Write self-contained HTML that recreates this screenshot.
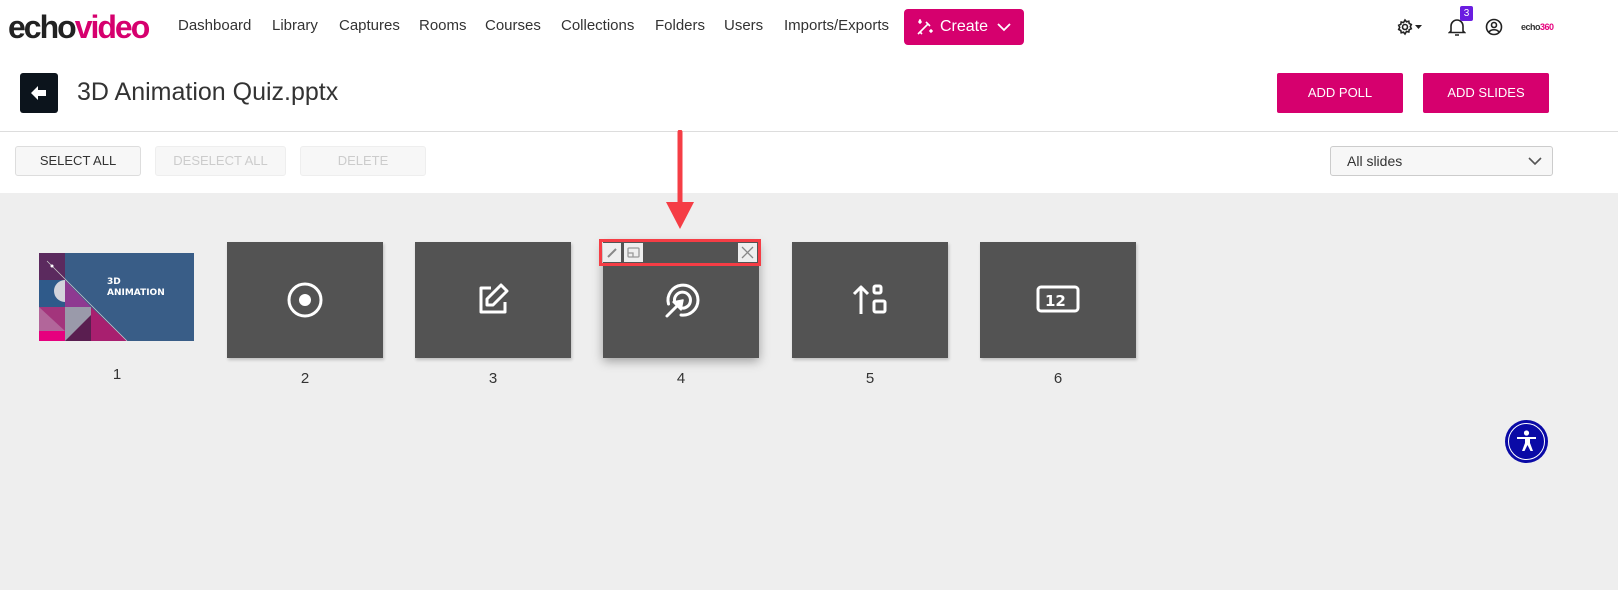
<!DOCTYPE html>
<html><head><meta charset="utf-8"><style>
*{box-sizing:border-box;margin:0;padding:0}
body{width:1618px;height:595px;overflow:hidden;font-family:"Liberation Sans",sans-serif;background:#fff;position:relative;color:#333}
.abs{position:absolute}
.nav a{position:absolute;top:17px;font-size:15px;color:#333;text-decoration:none}
.btn{position:absolute;border:1px solid #ddd;border-radius:3px;background:#f7f7f7;font-size:13px;text-align:center;line-height:28px}
.pbtn{position:absolute;background:#d6006e;color:#fff;font-size:13px;text-align:center;line-height:40px;border-radius:2px;top:73px;height:40px}
.slide{position:absolute;top:242px;width:156px;height:116px;background:#535353;box-shadow:1px 2px 3px rgba(0,0,0,.2)}
.num{position:absolute;top:370px;font-size:15px;color:#333;width:156px;text-align:center}
.slide svg{position:absolute;left:58px;top:38px}
</style></head><body>
<div class="abs" style="left:8px;top:7px;font-size:32px;font-weight:bold;letter-spacing:-2px;line-height:40px"><span style="color:#222">echo</span><span style="color:#d6006e">video</span></div>
<div class="nav">
<a style="left:178px">Dashboard</a><a style="left:272px">Library</a><a style="left:339px">Captures</a><a style="left:419px">Rooms</a><a style="left:485px">Courses</a><a style="left:561px">Collections</a><a style="left:655px">Folders</a><a style="left:724px">Users</a><a style="left:784px">Imports/Exports</a>
</div>
<div class="abs" style="left:904px;top:9px;width:120px;height:36px;background:#d6006e;border-radius:4px;color:#fff;font-size:16px;line-height:36px">
<svg class="abs" style="left:12px;top:10px" width="17" height="17" viewBox="0 0 17 17" fill="none" stroke="#fff" stroke-width="1.6"><path d="M2 15L12 5M4 13l2 2M10 3l4 4"/><path d="M3 3l1-2 1 2-1 1zM14 12l1-1 1 1-1 1z" fill="#fff"/></svg>
<span class="abs" style="left:36px">Create</span>
<svg class="abs" style="left:92px;top:12px" width="16" height="12" viewBox="0 0 16 12" fill="none" stroke="#fff" stroke-width="1.8"><path d="M2 3l6 6 6-6"/></svg>
</div>
<svg class="abs" style="left:1397px;top:18px" width="30" height="18" viewBox="0 0 30 18" fill="none" stroke="#222" stroke-width="1.6"><circle cx="8" cy="9" r="2.5"/><path d="M8 2l1.5 1.8 2.3-.6.4 2.3 2.1 1-1 2.1 1 2.1-2.1 1-.4 2.3-2.3-.6L8 16l-1.5-1.8-2.3.6-.4-2.3-2.1-1 1-2.1-1-2.1 2.1-1 .4-2.3 2.3.6z"/><path d="M18 7h7l-3.5 4z" fill="#222" stroke="none"/></svg>
<svg class="abs" style="left:1448px;top:17px" width="18" height="20" viewBox="0 0 18 20" fill="none" stroke="#222" stroke-width="1.6"><path d="M3 14V9a6 6 0 0112 0v5l1.5 1.5h-15z M7 18h4"/></svg>
<div class="abs" style="left:1460px;top:6px;width:13px;height:15px;background:#6a1de0;color:#fff;font-size:10px;text-align:center;line-height:15px;border-radius:2px">3</div>
<svg class="abs" style="left:1485px;top:18px" width="18" height="18" viewBox="0 0 18 18" fill="none" stroke="#222" stroke-width="1.6"><circle cx="9" cy="9" r="7.5"/><circle cx="9" cy="7" r="2.5"/><path d="M4 14c2-3 8-3 10 0"/></svg>
<div class="abs" style="left:1521px;top:22px;font-size:9px;font-weight:bold;letter-spacing:-.5px"><span style="color:#333">echo</span><span style="color:#e6007e">360</span></div>

<div class="abs" style="left:20px;top:73px;width:38px;height:40px;background:#0c141c;border-radius:3px">
<svg class="abs" style="left:10px;top:12px" width="18" height="16" viewBox="0 0 18 16"><path d="M1 8l7-7v4h8v6H8v4z" fill="#fff"/></svg></div>
<div class="abs" style="left:77px;top:78px;font-size:25px;color:#333">3D Animation Quiz.pptx</div>
<div class="pbtn" style="left:1277px;width:126px">ADD POLL</div>
<div class="pbtn" style="left:1423px;width:126px">ADD SLIDES</div>
<div class="abs" style="left:0;top:131px;width:1618px;height:1px;background:#ddd"></div>

<div class="btn" style="left:15px;top:146px;width:126px;height:30px;color:#333">SELECT ALL</div>
<div class="btn" style="left:155px;top:146px;width:131px;height:30px;color:#ccc;border-color:#eee">DESELECT ALL</div>
<div class="btn" style="left:300px;top:146px;width:126px;height:30px;color:#ccc;border-color:#eee">DELETE</div>
<div class="abs" style="left:1330px;top:146px;width:223px;height:30px;border:1px solid #ccc;border-radius:3px;background:#f7f7f7;font-size:14px;line-height:28px;padding-left:16px">All slides
<svg class="abs" style="left:197px;top:10px" width="14" height="9" viewBox="0 0 14 9" fill="none" stroke="#555" stroke-width="1.6"><path d="M1 1l6 6 6-6"/></svg></div>

<div class="abs" style="left:0;top:193px;width:1618px;height:397px;background:#eeeeee"></div>

<svg class="abs" style="left:39px;top:253px" width="155" height="88" viewBox="0 0 155 88">
<rect width="155" height="88" fill="#395d87"/>
<rect x="0" y="0" width="26" height="27" fill="#5b2a5e"/>
<rect x="0" y="27" width="26" height="27" fill="#2f5a8a"/>
<path d="M26 27a11 11 0 000 22z" fill="#d4d4dc"/>
<path d="M26 27L52 54H26z" fill="#8e3a91"/>
<rect x="0" y="54" width="26" height="24" fill="#a3357c"/>
<path d="M0 54L26 78H0z" fill="#b2669a"/>
<rect x="0" y="78" width="26" height="10" fill="#e6007e"/>
<rect x="26" y="54" width="26" height="34" fill="#9a9aaa"/>
<path d="M26 88L52 62V88z" fill="#5a1e50"/>
<path d="M52 54L88 88H52z" fill="#a81f6f"/>
<path d="M8 8L88 88" stroke="#ccc" stroke-width=".7"/>
<circle cx="13" cy="13" r="1.5" fill="#fff"/>
<text x="68" y="31" font-family="DejaVu Sans" font-weight="bold" font-size="9" fill="#fff">3D</text>
<text x="68" y="42" font-family="DejaVu Sans" font-weight="bold" font-size="9" fill="#fff">ANIMATION</text>
</svg>
<div class="num" style="left:39px;top:366px">1</div>

<div class="slide" style="left:227px"><svg width="40" height="40" viewBox="0 0 40 40" fill="none" stroke="#fff" stroke-width="3"><circle cx="20" cy="20" r="16"/><circle cx="20" cy="20" r="6" fill="#fff" stroke="none"/></svg></div>
<div class="num" style="left:227px">2</div>

<div class="slide" style="left:415px"><svg width="40" height="40" viewBox="0 0 40 40" fill="none" stroke="#fff" stroke-width="3" stroke-linejoin="round"><path d="M18 8H8v24h24V22"/><path d="M28 5l6 6-14 14h-6v-6z"/></svg></div>
<div class="num" style="left:415px">3</div>

<div class="slide" style="left:603px;box-shadow:0 3px 10px rgba(0,0,0,.35)"><svg width="40" height="40" viewBox="0 0 40 40" fill="none" stroke="#fff" stroke-width="3" stroke-linecap="round"><path d="M7.5 24A15 15 0 1 1 20 35"/><path d="M13.5 21A8 8 0 1 1 20 28"/><path d="M6 36L16 26"/><path d="M12 22L22 20L20 30z" fill="#fff" stroke-linejoin="round" stroke-width="1.5"/></svg></div>
<div class="abs" style="left:599px;top:239px;width:162px;height:27px;border:3px solid #f53d45"></div>
<div class="abs" style="left:603px;top:243px;width:18px;height:19px;background:#eee"><svg width="18" height="19" viewBox="0 0 18 19"><path d="M5 14L13 6" stroke="#888" stroke-width="2"/></svg></div>
<div class="abs" style="left:624px;top:243px;width:19px;height:19px;background:#eee"><svg width="19" height="19" viewBox="0 0 19 19" fill="none" stroke="#999" stroke-width="1.3"><rect x="4" y="5" width="11" height="9" rx="1"/><path d="M4 10h5v4"/></svg></div>
<div class="abs" style="left:738px;top:243px;width:19px;height:19px;background:#eee"><svg width="19" height="19" viewBox="0 0 19 19" stroke="#888" stroke-width="1.3"><path d="M4 4l11 11M15 4L4 15"/></svg></div>
<div class="num" style="left:603px">4</div>
<svg class="abs" style="left:665px;top:130px" width="30" height="100" viewBox="0 0 30 100"><path d="M15 2V75" stroke="#f53d45" stroke-width="5" stroke-linecap="round"/><path d="M1 72h28L15 99z" fill="#f53d45"/></svg>

<div class="slide" style="left:792px"><svg width="40" height="40" viewBox="0 0 40 40" fill="none" stroke="#fff" stroke-width="3" stroke-linejoin="round"><path d="M11 34V7M4 14l7-7 7 7"/><rect x="24" y="6" width="7" height="7" rx="1.5"/><rect x="24" y="21" width="11" height="11" rx="1.5"/></svg></div>
<div class="num" style="left:792px">5</div>

<div class="slide" style="left:980px"><svg width="44" height="40" viewBox="0 0 44 40" style="left:56px"><rect x="2" y="7" width="40" height="24" rx="3" fill="none" stroke="#fff" stroke-width="3"/><text x="9" y="26" font-family="DejaVu Sans" font-weight="bold" font-size="15" fill="#fff">12</text></svg></div>
<div class="num" style="left:980px">6</div>

<div class="abs" style="left:1505px;top:420px;width:43px;height:43px;border-radius:50%;background:#0a0aa6">
<div class="abs" style="left:3px;top:3px;width:37px;height:37px;border-radius:50%;border:1.5px solid #fff"></div>
<svg class="abs" style="left:11px;top:10px" width="21" height="23" viewBox="0 0 21 23" fill="#fff"><circle cx="10.5" cy="3" r="2.6"/><path d="M1 7h19v2h-6v4l3 8h-2.5l-3-6-3 6H6l3-8V9H1z"/></svg></div>
</body></html>
